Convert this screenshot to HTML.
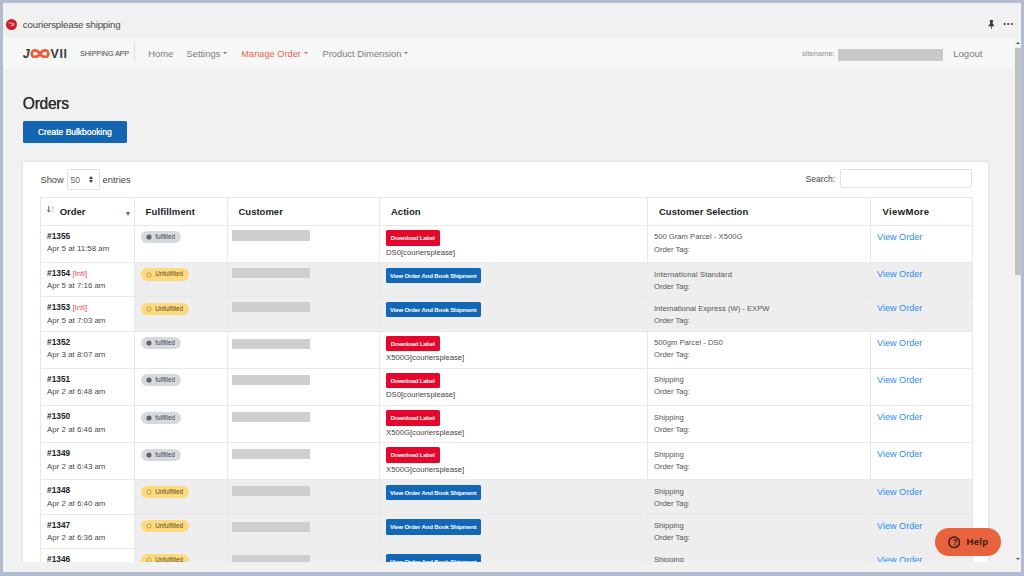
<!DOCTYPE html>
<html lang="en"><head><meta charset="utf-8"><title>couriersplease shipping</title>
<style>
*{box-sizing:border-box;margin:0;padding:0}
html,body{width:1024px;height:576px;overflow:hidden}
body{position:relative;background:#b1bcd0;font-family:"Liberation Sans",Arial,sans-serif;color:#333}
i{font-style:normal}
.abs{position:absolute}
#win{position:absolute;left:3px;top:3px;width:1018px;height:570px;background:#f1f1f1;overflow:hidden}
#nav{position:absolute;left:0;top:35px;width:1011.5px;height:31px;background:#f6f8f7}
.t{position:absolute;white-space:nowrap;line-height:1}
.navt{font-size:9.6px;color:#7b7c7d;top:10.600px;line-height:10px}
.caret{position:absolute;width:0;height:0;border-left:2px solid transparent;border-right:2px solid transparent;border-top:2.5px solid #6f7071}
#card{position:absolute;left:20px;top:158.8px;width:965.400px;height:420px;background:#fff;box-shadow:0 0 3px rgba(0,0,0,.13)}
.tbl{position:absolute;left:40px;top:197px;width:933.4px;height:400px;overflow:hidden}
.hrow{position:absolute;left:0;top:0;width:932.4px;height:28px}
.th{position:absolute;top:10px;font-size:9.5px;font-weight:bold;color:#222;line-height:1;white-space:nowrap}
.sorti{position:absolute;left:6.500px;top:9px}
.tri{position:absolute;left:85.500px;top:15.2px;width:0;height:0;border-left:2.5px solid transparent;border-right:2.5px solid transparent;border-top:4.300px solid #5558d6}
.row{position:absolute;left:0;width:932.4px;background:#fff}
.hl{position:absolute;left:0;top:0;width:100%;height:1px;background:#e8e9eb}
.row.un{background:#eeeeee}
.row .c0{position:absolute;left:0;top:0;bottom:0;width:93.8px;background:#fff}
.row span{position:absolute;white-space:nowrap;line-height:1}
.row span span{position:static}
.oid{left:7.1px;top:7.1px;font-size:8.3px;color:#222}
.intl{font-size:7.7px;color:#f0454a;font-weight:normal}
.odate{left:7.1px;top:20.3px;font-size:7.9px;color:#4a4a4a}
.badge{left:100.8px;top:6.3px;height:12.2px;border-radius:6.1px;font-size:6.3px;color:#333;padding-left:14.5px;padding-right:5.6px;line-height:12.2px !important}
.badge.ful{background:#d6dade;width:40.2px;color:#3c4043}
.badge.unf{background:#fdd97f;width:48px;color:#5a4a20}
.badge svg{position:absolute;left:5.300px;top:3.100px}
.cust{left:191.9px;top:5.2px;width:77.900px;height:10.2px;background:#cfcfcf}
.btn{left:345.5px;top:5.2px;height:15.4px;border-radius:1.6px;color:#fff;font-weight:bold;font-size:6.05px;letter-spacing:-.17px;line-height:16.6px !important;text-align:center}
.btn.red{width:54.6px;background:#e6062c}
.btn.blue{width:95.4px;top:5.7px;background:#1367b7}
.lbl{left:346px;top:23.6px;font-size:7.7px;color:#444}
.sel{left:614px;top:8.4px;font-size:7.65px;color:#555}
.tag{left:614px;top:20.6px;font-size:7.65px;color:#555}
.vo{left:837px;top:8.2px;font-size:9.1px;color:#2c8df2}
.vl{position:absolute;top:0;bottom:0;width:1px;background:#e8e9eb}

</style></head>
<body>
<div id="win">
 <!-- title bar -->
 <div class="abs" style="left:2.7px;top:15.500px;width:11.6px;height:11.6px;border-radius:50%;background:#cb1f2e"></div>
 <svg class="abs" style="left:5px;top:19.4px" width="7" height="4" viewBox="0 0 14 8"><path d="M1 2h7a2.5 2.5 0 0 1 0 5H5M9 3h4M9 6h4" stroke="#f6c9cd" stroke-width="1.6" fill="none"/></svg>
 <span class="t" style="left:19.8px;top:17.300px;font-size:9.700px;letter-spacing:-.18px;color:#4a4a4a">couriersplease shipping</span>
 <!-- pin + dots -->
 <svg class="abs" style="left:984.600px;top:16.900px" width="6.8" height="9" viewBox="0 0 13.600 18"><path d="M3.400 0h6.800v2.300H9.400v5.400l3.400 3.700v1.300H7.600V17l-.8 1-.8-1v-4.300H.8v-1.300l3.400-3.700V2.300H3.400z" fill="#383838"/></svg>
 <svg class="abs" style="left:1000px;top:19.400px" width="11" height="4" viewBox="0 0 11 4"><circle cx="1.600" cy="2" r="1" fill="#333"/><circle cx="5.200" cy="2" r="1" fill="#333"/><circle cx="8.800" cy="2" r="1" fill="#333"/></svg>
 <!-- navbar -->
 <div id="nav">
  <span class="t" style="left:19.8px;top:9.6px;font-size:12.4px;font-weight:bold;font-style:italic;color:#3b3b3d">J</span>
  <svg class="abs" style="left:27px;top:10.800px" width="20" height="9.4" viewBox="0 0 40 18.800"><path d="M20 9.400C17.200 4.800 14.200 2.900 9.700 2.900a6.500 6.500 0 0 0 0 13c4.500 0 7.500-1.900 10.300-6.500s5.800-6.500 10.300-6.500a6.500 6.500 0 0 1 0 13c-4.500 0-7.500-1.900-10.300-6.500z" fill="none" stroke="#ee5a3a" stroke-width="5.400"/></svg>
  <span class="t" style="left:47.4px;top:9.600px;font-size:12.4px;font-weight:bold;color:#3b3b3d;letter-spacing:.75px">VII</span>
  <span class="t" style="left:77px;top:12.1px;font-size:7.25px;color:#454545;letter-spacing:-.15px">SHIPPING APP</span>
  <i class="abs" style="left:131.3px;top:3.2px;width:1px;height:20.4px;background:#e2e3e4"></i>
  <span class="t navt" style="left:145.2px;font-size:9.4px">Home</span>
  <span class="t navt" style="left:183.5px;font-size:9.35px">Settings</span><i class="caret" style="left:220.2px;top:13.900px"></i>
  <span class="t navt" style="left:238.3px;color:#e9624c;font-size:9.25px">Manage Order</span><i class="caret" style="left:301.400px;top:13.900px;border-top-color:#e9624c"></i>
  <span class="t navt" style="left:319.5px;font-size:9.36px">Product Dimension</span><i class="caret" style="left:401.3px;top:13.900px"></i>
  <span class="t" style="left:799px;top:12.4px;font-size:7.6px;color:#86938d">sitename:</span>
  <i class="abs" style="left:834.500px;top:11px;width:105.6px;height:12px;background:#c9c9c9"></i>
  <span class="t navt" style="left:950.2px">Logout</span>
 </div>
 <!-- page heading -->
 <span class="t" style="left:19.8px;top:92.5px;font-size:15.6px;letter-spacing:-.28px;color:#2b2b2b;text-shadow:0 0 .4px #2b2b2b">Orders</span>
 <div class="abs" style="left:19.5px;top:117.8px;width:104.6px;height:22px;border-radius:1.6px;background:#1465b4;color:#fff;font-size:8.45px;text-shadow:0 0 .35px #fff;line-height:22px;text-align:center;white-space:nowrap">Create Bulkbooking</div>
 <div id="card"></div>
</div>
<!-- length + search -->
<span class="t" style="left:40.5px;top:174.6px;font-size:9.3px;line-height:10px;color:#444">Show</span>
<div class="abs" style="left:66.5px;top:168.8px;width:33.8px;height:21.2px;border:1px solid #dfe3e7;border-radius:1.6px;background:#fff"></div>
<span class="t" style="left:70.6px;top:175.8px;font-size:8.4px;color:#606468">50</span>
<i class="abs" style="left:89.400px;top:175.900px;width:0;height:0;border-left:2.6px solid transparent;border-right:2.6px solid transparent;border-bottom:3px solid #343a40"></i>
<i class="abs" style="left:89.4px;top:180.100px;width:0;height:0;border-left:2.6px solid transparent;border-right:2.6px solid transparent;border-top:3px solid #343a40"></i>
<span class="t" style="left:102.5px;top:174.6px;font-size:9.4px;line-height:10px;color:#444">entries</span>
<span class="t" style="left:805.500px;top:175.100px;font-size:8.6px;color:#444">Search:</span>
<div class="abs" style="left:840px;top:169.2px;width:131.800px;height:19.2px;border:1px solid #dfe3e7;border-radius:1.6px;background:#fff"></div>
<div class="tbl">
<div class="hrow"><i class="hl"></i><span class="th" style="left:19.7px">Order</span><span class="th" style="left:105.5px;letter-spacing:.14px">Fulfillment</span><span class="th" style="left:198.5px">Customer</span><span class="th" style="left:351.0px">Action</span><span class="th" style="left:619.0px">Customer Selection</span><span class="th" style="left:842.5px;letter-spacing:.35px">ViewMore</span><svg class="sorti" width="8" height="7" viewBox="0 0 16 14"><path d="M3.500 0v11M.8 8.500l2.700 3.500 2.700-3.500" stroke="#444" stroke-width="1.700" fill="none"/><path d="M11.500 13V2M8.800 4.500L11.500 1l2.700 3.500" stroke="#c4c4c4" stroke-width="1.700" fill="none"/></svg><span class="tri"></span></div>
<div class="row" style="top:28.0px;height:38.2px"><div class="c0"></div><i class="hl"></i><span class="oid"><b>#1355</b></span><span class="odate">Apr 5 at 11:58 am</span><span class="badge ful"><svg width="6" height="6" viewBox="0 0 12 12"><circle cx="6" cy="6" r="5.200" fill="#5f6872"/></svg><span>fulfilled</span></span><span class="cust" style="top:5.4px"></span><span class="btn red">Download Label</span><span class="lbl">DS0[couriersplease]</span><span class="sel">500 Gram Parcel - X500G</span><span class="tag">Order Tag:</span><span class="vo">View Order</span></div>
<div class="row un" style="top:65.2px;height:35.1px"><div class="c0"></div><i class="hl"></i><span class="oid"><b>#1354</b> <span class="intl">[Intl]</span></span><span class="odate">Apr 5 at 7:16 am</span><span class="badge unf"><svg width="6" height="6" viewBox="0 0 12 12"><circle cx="6" cy="6" r="4.200" fill="#fde9b4" stroke="#b8860b" stroke-width="1.600"/></svg><span>Unfulfilled</span></span><span class="cust" style="top:5.7px"></span><span class="btn blue">View Order And Book Shipment</span><span class="sel" style="letter-spacing:.13px">International Standard</span><span class="tag">Order Tag:</span><span class="vo">View Order</span></div>
<div class="row un" style="top:99.3px;height:35.2px"><div class="c0"></div><i class="hl"></i><span class="oid"><b>#1353</b> <span class="intl">[Intl]</span></span><span class="odate">Apr 5 at 7:03 am</span><span class="badge unf"><svg width="6" height="6" viewBox="0 0 12 12"><circle cx="6" cy="6" r="4.200" fill="#fde9b4" stroke="#b8860b" stroke-width="1.600"/></svg><span>Unfulfilled</span></span><span class="cust" style="top:5.7px"></span><span class="btn blue">View Order And Book Shipment</span><span class="sel">International Express (W) - EXPW</span><span class="tag">Order Tag:</span><span class="vo">View Order</span></div>
<div class="row" style="top:133.5px;height:38.3px"><div class="c0"></div><i class="hl"></i><span class="oid"><b>#1352</b></span><span class="odate">Apr 3 at 8:07 am</span><span class="badge ful"><svg width="6" height="6" viewBox="0 0 12 12"><circle cx="6" cy="6" r="5.200" fill="#5f6872"/></svg><span>fulfilled</span></span><span class="cust" style="top:8.0px"></span><span class="btn red">Download Label</span><span class="lbl">X500G[couriersplease]</span><span class="sel">500gm Parcel - DS0</span><span class="tag">Order Tag:</span><span class="vo">View Order</span></div>
<div class="row" style="top:170.8px;height:38.5px"><div class="c0"></div><i class="hl"></i><span class="oid"><b>#1351</b></span><span class="odate">Apr 2 at 6:48 am</span><span class="badge ful"><svg width="6" height="6" viewBox="0 0 12 12"><circle cx="6" cy="6" r="5.200" fill="#5f6872"/></svg><span>fulfilled</span></span><span class="cust" style="top:7.1px"></span><span class="btn red">Download Label</span><span class="lbl">DS0[couriersplease]</span><span class="sel">Shipping</span><span class="tag">Order Tag:</span><span class="vo">View Order</span></div>
<div class="row" style="top:208.3px;height:38.0px"><div class="c0"></div><i class="hl"></i><span class="oid"><b>#1350</b></span><span class="odate">Apr 2 at 6:46 am</span><span class="badge ful"><svg width="6" height="6" viewBox="0 0 12 12"><circle cx="6" cy="6" r="5.200" fill="#5f6872"/></svg><span>fulfilled</span></span><span class="cust" style="top:6.4px"></span><span class="btn red">Download Label</span><span class="lbl">X500G[couriersplease]</span><span class="sel">Shipping</span><span class="tag">Order Tag:</span><span class="vo">View Order</span></div>
<div class="row" style="top:245.3px;height:38.1px"><div class="c0"></div><i class="hl"></i><span class="oid"><b>#1349</b></span><span class="odate">Apr 2 at 6:43 am</span><span class="badge ful"><svg width="6" height="6" viewBox="0 0 12 12"><circle cx="6" cy="6" r="5.200" fill="#5f6872"/></svg><span>fulfilled</span></span><span class="cust" style="top:6.9px"></span><span class="btn red">Download Label</span><span class="lbl">X500G[couriersplease]</span><span class="sel">Shipping</span><span class="tag">Order Tag:</span><span class="vo">View Order</span></div>
<div class="row un" style="top:282.4px;height:35.3px"><div class="c0"></div><i class="hl"></i><span class="oid"><b>#1348</b></span><span class="odate">Apr 2 at 6:40 am</span><span class="badge unf"><svg width="6" height="6" viewBox="0 0 12 12"><circle cx="6" cy="6" r="4.200" fill="#fde9b4" stroke="#b8860b" stroke-width="1.600"/></svg><span>Unfulfilled</span></span><span class="cust" style="top:6.3px"></span><span class="btn blue">View Order And Book Shipment</span><span class="sel">Shipping</span><span class="tag">Order Tag:</span><span class="vo">View Order</span></div>
<div class="row un" style="top:316.7px;height:35.4px"><div class="c0"></div><i class="hl"></i><span class="oid"><b>#1347</b></span><span class="odate">Apr 2 at 6:36 am</span><span class="badge unf"><svg width="6" height="6" viewBox="0 0 12 12"><circle cx="6" cy="6" r="4.200" fill="#fde9b4" stroke="#b8860b" stroke-width="1.600"/></svg><span>Unfulfilled</span></span><span class="cust" style="top:8.4px"></span><span class="btn blue">View Order And Book Shipment</span><span class="sel">Shipping</span><span class="tag">Order Tag:</span><span class="vo">View Order</span></div>
<div class="row un" style="top:351.1px;height:35.2px"><div class="c0"></div><i class="hl"></i><span class="oid"><b>#1346</b></span><span class="odate">Apr 2 at 6:33 am</span><span class="badge unf"><svg width="6" height="6" viewBox="0 0 12 12"><circle cx="6" cy="6" r="4.200" fill="#fde9b4" stroke="#b8860b" stroke-width="1.600"/></svg><span>Unfulfilled</span></span><span class="cust" style="top:6.7px"></span><span class="btn blue">View Order And Book Shipment</span><span class="sel">Shipping</span><span class="tag">Order Tag:</span><span class="vo">View Order</span></div>
<i class="vl" style="left:0.4px"></i><i class="vl" style="left:94.0px"></i><i class="vl" style="left:186.8px"></i><i class="vl" style="left:339.4px"></i><i class="vl" style="left:607.0px"></i><i class="vl" style="left:830.2px"></i><i class="vl" style="left:932.0px"></i></div>
<!-- bottom strip -->
<div class="abs" style="left:3px;top:562px;width:1018px;height:10.600px;background:#f1f1f1"></div>
<!-- scrollbar -->
<div class="abs" style="left:1014.6px;top:38.3px;width:6.4px;height:523.700px;background:#f1f1f1"></div>
<div class="abs" style="left:1015.2px;top:48.2px;width:5.4px;height:226.8px;background:#c1c1c1"></div>
<i class="abs" style="left:1015.6px;top:42.400px;width:0;height:0;border-left:2.2px solid transparent;border-right:2.2px solid transparent;border-bottom:2.400px solid #505050"></i>
<i class="abs" style="left:1015.6px;top:557.6px;width:0;height:0;border-left:2.2px solid transparent;border-right:2.2px solid transparent;border-top:2.400px solid #505050"></i>
<!-- help -->
<div class="abs" style="left:935.4px;top:528.1px;width:66px;height:27.8px;border-radius:14px;background:#e8623d"></div>
<svg class="abs" style="left:948.4px;top:536px" width="12.4" height="12.4" viewBox="0 0 24.800 24.800"><circle cx="12.400" cy="12.4" r="10.6" fill="none" stroke="#3a1c12" stroke-width="3"/></svg>
<span class="t" style="left:952.6px;top:538.3px;font-size:8.4px;font-weight:bold;color:#3a1c12">?</span>
<span class="t" style="left:966.4px;top:537.2px;font-size:9.6px;font-weight:bold;color:#3a1c12;letter-spacing:.35px">Help</span>
<!-- frame border overlays -->
<div class="abs" style="left:0;top:572.400px;width:1024px;height:3.6px;background:#b1bcd0"></div>
<div class="abs" style="left:0;top:0;width:1024px;height:3px;background:#b1bcd0"></div>
<div class="abs" style="left:0;top:0;width:3px;height:576px;background:#b1bcd0"></div>
<div class="abs" style="left:1021px;top:0;width:3px;height:576px;background:#b1bcd0"></div>
</body></html>
